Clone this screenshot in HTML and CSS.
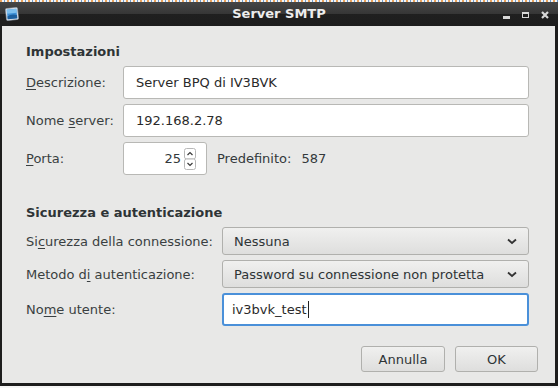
FILE: index.html
```html
<!DOCTYPE html>
<html lang="it">
<head>
    <meta charset="UTF-8">
    <title>Server SMTP</title>
    <link rel="stylesheet" href="styles.css">
</head>
<body>
    <div class="desk-strip"></div>

    <!-- Dialog window -->
    <div class="window">
        <div class="titlebar">
            <svg class="app-icon" width="14" height="14" viewBox="0 0 14 14">
                <g transform="rotate(-6 7 7)">
                    <rect x="1" y="1" width="12" height="12" rx="1" fill="#dfe6ee" stroke="#9aa7b5" stroke-width="0.6"/>
                    <rect x="2.2" y="2.2" width="9.6" height="9.6" fill="#3c8fd6"/>
                    <rect x="2.2" y="2.2" width="9.6" height="4" fill="#7dc0f0"/>
                    <path d="M2.2 9 Q6 6.5 11.8 8.5 L11.8 11.8 L2.2 11.8 Z" fill="#1d5f9e"/>
                </g>
            </svg>
            <span class="title">Server SMTP</span>
            <div class="win-buttons">
                <span class="wb-min"></span>
                <span class="wb-max"></span>
                <svg class="wb-close" width="8" height="8" viewBox="0 0 8 8">
                    <path d="M1 1 L7 7 M7 1 L1 7" stroke="#d8d8d8" stroke-width="2.2"/>
                </svg>
            </div>
        </div>

        <div class="content">
            <!-- Impostazioni -->
            <h3 class="section-title">Impostazioni</h3>
            <div class="form-grid grid-settings">
                <label><u>D</u>escrizione:</label>
                <div class="entry">Server BPQ di IV3BVK</div>

                <label>Nome <u>s</u>erver:</label>
                <div class="entry">192.168.2.78</div>

                <label><u>P</u>orta:</label>
                <div class="port-row">
                    <div class="spin">
                        <span class="spin-value">25</span>
                        <div class="spin-buttons">
                            <svg width="12" height="22" viewBox="0 0 12 22">
                                <rect x="0.5" y="0.5" width="11" height="10.5" rx="2" fill="#fff" stroke="#b8b8b8"/>
                                <rect x="0.5" y="11" width="11" height="10.5" rx="2" fill="#fff" stroke="#b8b8b8"/>
                                <path d="M3.5 7 L6 4.5 L8.5 7" fill="none" stroke="#3a3a3a" stroke-width="1.2"/>
                                <path d="M3.5 15 L6 17.5 L8.5 15" fill="none" stroke="#3a3a3a" stroke-width="1.2"/>
                            </svg>
                        </div>
                    </div>
                    <span class="default-label">Predefinito:</span>
                    <span>587</span>
                </div>
            </div>

            <!-- Sicurezza e autenticazione -->
            <h3 class="section-title second">Sicurezza e autenticazione</h3>
            <div class="form-grid grid-security">
                <label>Si<u>c</u>urezza della connessione:</label>
                <div class="combo">
                    <span>Nessuna</span>
                    <svg width="10" height="7" viewBox="0 0 10 7"><path d="M1 1.5 L5 5 L9 1.5" fill="none" stroke="#333" stroke-width="1.8"/></svg>
                </div>

                <label>Metodo d<u>i</u> autenticazione:</label>
                <div class="combo">
                    <span>Password su connessione non protetta</span>
                    <svg width="10" height="7" viewBox="0 0 10 7"><path d="M1 1.5 L5 5 L9 1.5" fill="none" stroke="#333" stroke-width="1.8"/></svg>
                </div>

                <label>No<u>m</u>e utente:</label>
                <div class="entry focused">iv3bvk_test<span class="caret"></span></div>
            </div>

            <!-- Dialog buttons -->
            <div class="actions">
                <button class="btn">Annulla</button>
                <button class="btn">OK</button>
            </div>
        </div>
    </div>
</body>
</html>
```

FILE: styles.css
```css
* {
    margin: 0;
    padding: 0;
    box-sizing: border-box;
}
body {
    background: #f6f6f6;
    font-family: 'DejaVu Sans', sans-serif;
    font-size: 13px;
    color: #33393b;
}
.desk-strip {
    height: 2px;
    background: repeating-linear-gradient(to right, #e9a15a 0 2px, #f4f4f4 2px 4px, #6b9bd1 4px 5px, #f4f4f4 5px 7px);
}
.window {
    width: 558px;
    background: #1d1d1d;
    padding-bottom: 3px;
}
.titlebar {
    height: 24px;
    display: flex;
    align-items: center;
    position: relative;
    background: linear-gradient(#464646, #363636 48%, #1f1f1f 48%, #1d1d1d);
}
.app-icon {
    margin-left: 5px;
}
.title {
    position: absolute;
    left: 0;
    right: 0;
    text-align: center;
    color: #ededed;
    font-weight: bold;
    line-height: 24px;
}
.win-buttons {
    margin-left: auto;
    margin-right: 9px;
    display: flex;
    align-items: center;
    gap: 12px;
    padding-top: 2px;
}
.wb-min {
    width: 7px;
    height: 3px;
    background: #d8d8d8;
    margin-top: 5px;
}
.wb-max {
    width: 7px;
    height: 6px;
    border: 1px solid #d8d8d8;
    border-top-width: 2px;
}
.content {
    margin: 0 3px 0 2px;
    height: 357px;
    background: #e8e8e7;
    padding: 18px 17px 0 24px;
}
.section-title {
    font-size: 13px;
    font-weight: bold;
    line-height: 16px;
    color: #2e3436;
    margin-bottom: 6px;
}
.section-title.second {
    margin-top: 30px;
}
.form-grid {
    display: grid;
    row-gap: 5px;
    align-items: center;
    margin-right: 9px;
}
.grid-settings {
    grid-template-columns: 97px 1fr;
    grid-auto-rows: 33px;
}
.grid-security {
    grid-template-columns: 196px 1fr;
    grid-template-rows: 28px 28px 33px;
}
label {
    color: #3a3f41;
}
u {
    text-decoration-thickness: 1px;
    text-underline-offset: 2px;
}
.entry {
    height: 33px;
    display: flex;
    align-items: center;
    background: #fff;
    border: 1px solid #b8b8b5;
    border-radius: 3px;
    padding-left: 12px;
    color: #2a2a2a;
}
.entry.focused {
    border: 2px solid #4a90d9;
    padding-left: 8px;
}
.caret {
    width: 1px;
    height: 17px;
    background: #222;
    margin-left: 1px;
}
.port-row {
    display: flex;
    align-items: center;
    height: 33px;
}
.spin {
    width: 84px;
    height: 33px;
    display: flex;
    align-items: center;
    justify-content: flex-end;
    background: #fff;
    border: 1px solid #b8b8b5;
    border-radius: 3px;
    padding-right: 10px;
}
.spin-value {
    margin-right: 3px;
}
.spin-buttons {
    display: flex;
}
.default-label {
    margin-left: 10px;
    margin-right: 10px;
}
.combo {
    height: 28px;
    display: flex;
    align-items: center;
    justify-content: space-between;
    padding: 0 11px;
    border: 1px solid #b0b0ad;
    border-radius: 3px;
    background: linear-gradient(#f0f0ef, #dededd);
    color: #2e3436;
}
.actions {
    display: flex;
    justify-content: flex-end;
    gap: 10px;
    margin-top: 20px;
}
.btn {
    width: 84px;
    height: 26px;
    font-family: 'DejaVu Sans', sans-serif;
    font-size: 13px;
    color: #2e3436;
    border: 1px solid #b0b0ad;
    border-radius: 3px;
    background: linear-gradient(#f0f0ef, #dededd);
}
.btn + .btn {
    width: 83px;
}
```
